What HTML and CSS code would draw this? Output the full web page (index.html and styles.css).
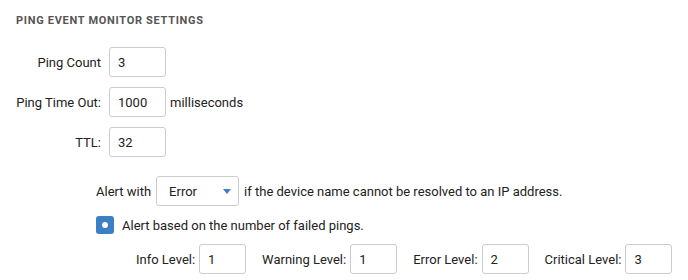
FILE: index.html
```html
<!DOCTYPE html>
<html>
<head>
<meta charset="utf-8">
<link rel="stylesheet" href="styles.css">
</head>
<body>
<section class="panel">
  <h2 class="title">PING EVENT MONITOR SETTINGS</h2>
  <div class="grid">
    <label class="lbl">Ping Count</label>
    <div class="cell"><span class="field">3</span></div>
    <label class="lbl">Ping Time Out:</label>
    <div class="cell"><span class="field">1000</span><span class="unit">milliseconds</span></div>
    <label class="lbl">TTL:</label>
    <div class="cell"><span class="field">32</span></div>
  </div>
  <div class="alerts">
    <div class="row">
      <span class="txt">Alert with</span>
      <span class="select"><span class="sel-val">Error</span><svg class="caret" width="8" height="5" viewBox="0 0 8 5"><path d="M0 0H8L4 5Z" fill="#3b7fc4"/></svg></span>
      <span class="txt">if the device name cannot be resolved to an IP address.</span>
    </div>
    <div class="row check-row">
      <span class="check"><span class="dot"></span></span>
      <span class="txt">Alert based on the number of failed pings.</span>
    </div>
    <div class="row levels">
      <span class="lv"><span class="txt">Info Level:</span><span class="field small">1</span></span>
      <span class="lv"><span class="txt">Warning Level:</span><span class="field small">1</span></span>
      <span class="lv"><span class="txt">Error Level:</span><span class="field small">2</span></span>
      <span class="lv"><span class="txt">Critical Level:</span><span class="field small">3</span></span>
    </div>
  </div>
</section>
</body>
</html>
```
FILE: styles.css
```css
html, body {
  margin: 0;
  padding: 0;
  background: #fff;
}
body {
  font-family: Roboto, "Liberation Sans", sans-serif;
  font-size: 13px;
  color: #222;
  white-space: nowrap;
}
.panel {
  padding: 12px 16px 0 16px;
}
.title {
  margin: 0;
  font-size: 11px;
  font-weight: 700;
  letter-spacing: 0.7px;
  color: #555;
  line-height: 18px;
}
.grid {
  margin-top: 17px;
  display: grid;
  grid-template-columns: 85px auto;
  column-gap: 8px;
  row-gap: 10px;
  align-items: center;
}
.lbl {
  text-align: right;
}
.cell {
  display: flex;
  align-items: center;
  gap: 4px;
}
.field {
  box-sizing: border-box;
  display: inline-flex;
  align-items: center;
  width: 57px;
  height: 30px;
  padding-left: 8px;
  border: 1px solid #ccc;
  border-radius: 3px;
  background: #fff;
}
.field.small {
  width: 47px;
}
.alerts {
  margin-top: 19px;
  padding-left: 80px;
  display: flex;
  flex-direction: column;
  gap: 10px;
}
.row {
  display: flex;
  align-items: center;
  height: 30px;
}
.select {
  box-sizing: border-box;
  display: inline-flex;
  align-items: center;
  justify-content: space-between;
  width: 83px;
  height: 30px;
  margin: 0 5px 0 5px;
  padding: 0 7px 0 12px;
  border: 1px solid #ccc;
  border-radius: 3px;
}
.check-row {
  height: 18px;
}
.check {
  box-sizing: border-box;
  width: 18px;
  height: 18px;
  border-radius: 3px;
  background: #3b7fc4;
  display: inline-flex;
  align-items: center;
  justify-content: center;
  margin-right: 8px;
}
.dot {
  width: 6px;
  height: 6px;
  border-radius: 50%;
  background: #fff;
}
.levels {
  padding-left: 40px;
  gap: 16px;
}
.lv {
  display: flex;
  align-items: center;
  gap: 4px;
}
```
